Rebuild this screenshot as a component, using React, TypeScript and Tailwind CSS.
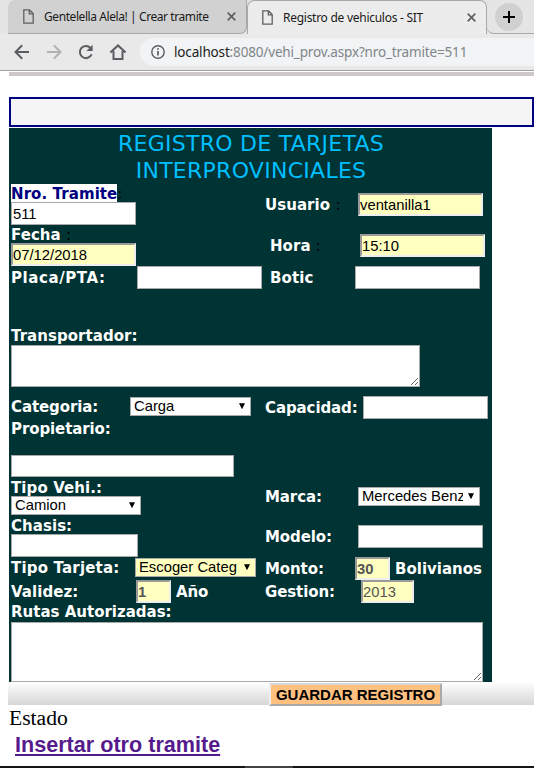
import type { ReactNode } from 'react';

const base = 'block shrink-0 text-[14.8px] text-black outline-none ';
const plain = base + 'h-[23px] border border-[#a9a9a9] bg-white px-px font-["Liberation_Sans",Arial,sans-serif] ';
const inset =
  base +
  'h-[23px] border-2 border-t-[#9a9a9a] border-l-[#9a9a9a] border-r-[#eeeeee] border-b-[#eeeeee] bg-[#ffffc0] font-["Liberation_Sans",Arial,sans-serif] ';

function Label({ children, className = '' }: { children: ReactNode; className?: string }) {
  return (
    <span
      className={
        'block shrink-0 whitespace-pre font-["DejaVu_Sans",Verdana,sans-serif] text-[15px] font-bold leading-[18px] tracking-[-0.1px] text-white ' +
        className
      }
    >
      {children}
    </span>
  );
}

function Colon() {
  return <span className="font-normal text-black">:</span>;
}

function Select({ value, className }: { value: string; className: string }) {
  return (
    <div
      className={
        'flex h-[19px] shrink-0 items-center border border-[#a9a9a9] pl-[3px] pr-[5px] font-["Liberation_Sans",Arial,sans-serif] text-[14.8px] leading-[17px] text-black ' +
        className
      }
    >
      <span className="flex-1 overflow-hidden whitespace-nowrap">{value}</span>
      <svg width="6" height="7" viewBox="0 0 6 7" className="ml-[5px] shrink-0">
        <path d="M0 0.3h6L3 6.3z" fill="#000" />
      </svg>
    </div>
  );
}

function PageIcon() {
  return (
    <svg width="11" height="15" viewBox="0 0 11 15" fill="none" stroke="#5f6062" strokeWidth="1.3" className="shrink-0">
      <path d="M0.8 0.8h5.7l3.7 3.8v9.5H0.8zM6.3 0.8v4h3.9" />
    </svg>
  );
}

function CloseIcon() {
  return (
    <svg width="9" height="9" viewBox="0 0 9 9" stroke="#5f6062" strokeWidth="1.7" className="shrink-0">
      <path d="M0.7 0.7l7.6 7.6M8.3 0.7L0.7 8.3" />
    </svg>
  );
}

function Browser() {
  return (
    <header className='h-[76px] font-["Noto_Sans",sans-serif]'>
      <div className="flex h-[34px] bg-[#e5e5e5] pl-2">
        <div className="flex h-[34px] w-[239px] items-center rounded-tl-[7px] rounded-br-[7px] border-b border-r border-[#a8a8a8] bg-[#d1d1d1] pl-[15px] pr-[10px]">
          <PageIcon />
          <span className="ml-[10px] flex-1 whitespace-nowrap text-[12px] tracking-[-0.42px] text-[#1a1a1a]">Gentelella Alela! | Crear tramite</span>
          <CloseIcon />
        </div>
        <div className="flex h-[34px] w-[240px] items-center rounded-t-[7px] border-x border-t border-[#a8a8a8] bg-[#ececec] pl-[14px] pr-[10px]">
          <PageIcon />
          <span className="ml-[10px] flex-1 whitespace-nowrap text-[12px] tracking-[-0.27px] text-[#1a1a1a]">Registro de vehiculos - SIT</span>
          <CloseIcon />
        </div>
        <div className="flex h-[34px] flex-1 rounded-bl-[7px] border-b border-[#a8a8a8] pl-[8px] pt-[3px]">
          <div className="flex h-7 w-7 items-center justify-center rounded-full bg-[#d0d0d0]">
            <svg width="12" height="12" viewBox="0 0 12 12" stroke="#000" strokeWidth="2">
              <path d="M6 0v12M0 6h12" />
            </svg>
          </div>
        </div>
      </div>
      <div className="flex h-[37px] items-center border-b border-[#a0a0a0] bg-[#e9e9e9] pl-[14px]">
        <svg width="16" height="16" viewBox="0 0 16 16" fill="none" stroke="#5a5d61" strokeWidth="2" className="shrink-0">
          <path d="M15 8H2M8.2 1.3L1.5 8l6.7 6.7" />
        </svg>
        <svg width="16" height="16" viewBox="0 0 16 16" fill="none" stroke="#b2b2b2" strokeWidth="2" className="ml-4 shrink-0">
          <path d="M1 8h13M7.8 1.3L14.5 8l-6.7 6.7" />
        </svg>
        <svg width="16" height="16" viewBox="0 0 16 16" fill="none" stroke="#5a5d61" strokeWidth="2" className="ml-4 shrink-0">
          <path d="M13.6 10.4A6.1 6.1 0 1 1 12.4 3.8" />
          <path d="M14.6 0.8v6.2H8.4z" fill="#5a5d61" stroke="none" />
        </svg>
        <svg width="18" height="18" viewBox="0 0 18 18" fill="none" stroke="#5a5d61" strokeWidth="2" className="ml-[15px] shrink-0">
          <path d="M1.4 9.6L9 2.4l7.6 7.2M4.5 8V16h9V8" />
        </svg>
        <div className="ml-[13px] flex h-7 flex-1 items-center rounded-l-full bg-[#f1f3f4] pl-[11px]">
          <svg width="14" height="14" viewBox="0 0 14 14" fill="none" stroke="#5a5d61" strokeWidth="1.4" className="shrink-0">
            <circle cx="7" cy="7" r="6.2" />
            <path d="M7 3.2v1.6M7 6v4.6" strokeWidth="1.7" />
          </svg>
          <span className="ml-[9px] whitespace-nowrap text-[13.5px] tracking-[-0.16px] text-[#80868b]">
            <span className="text-[#222]">localhost</span>:8080/vehi_prov.aspx?nro_tramite=511
          </span>
        </div>
      </div>
      <div className="ml-[9px] mt-px h-[4px] bg-[#cbc8c7]" />
    </header>
  );
}

export default function App() {
  return (
    <div className="h-[768px] w-[534px] overflow-hidden bg-white">
      <Browser />
      <div className="ml-[9px] mt-[21px] h-[30px] border-2 border-[#000080] bg-[#f5f5f5]" />
      <main className="ml-[9px] mt-px h-[554px] w-[483px] bg-[#003333] pl-[2px]">
        <h1 className='h-[55px] whitespace-nowrap pr-px pt-[2px] text-center font-["DejaVu_Sans",Verdana,sans-serif] text-[22px] leading-[27px] tracking-[0.27px] text-[#00bfff]'>
          REGISTRO DE TARJETAS
          <br />
          INTERPROVINCIALES
        </h1>
        <div className="flex h-[83px]">
          <div className="w-[254px] pt-px">
            <Label className="!h-[18px] !leading-[20px] !tracking-[0.08px]">
              <span className="inline-block h-[18px] bg-white text-[#000080]">Nro. Tramite</span>
              <Colon />
            </Label>
            <input className={plain + 'w-[125px]'} defaultValue="511" />
            <Label className="!h-[18px] !leading-[20px] !tracking-[0.05px]">
              Fecha <Colon />
            </Label>
            <input className={inset + 'w-[125px]'} defaultValue="07/12/2018" />
          </div>
          <div className="pt-[10px]">
            <div className="flex items-center">
              <Label className="w-[93px] !tracking-[0.05px]">
                Usuario <Colon />
              </Label>
              <input className={inset + 'w-[125px]'} defaultValue="ventanilla1" />
            </div>
            <div className="mt-[18px] flex items-center pl-[5px]">
              <Label className="w-[90px] !tracking-[0.05px]">
                Hora <Colon />
              </Label>
              <input className={inset + 'w-[125px]'} defaultValue="15:10" />
            </div>
          </div>
        </div>
        <div className="flex h-[23px] items-center">
          <Label className="w-[126px] !tracking-[0.58px]">Placa/PTA:</Label>
          <input className={plain + 'w-[125px]'} />
          <Label className="ml-[8px] w-[85px] !tracking-[0.1px]">Botic</Label>
          <input className={plain + 'w-[125px]'} />
        </div>
        <Label className="mt-[38px] !tracking-[0.05px]">Transportador:</Label>
        <textarea className="block h-[42px] w-[409px] border border-[#a9a9a9] bg-white outline-none" />
        <div className="mt-[9px] flex h-[23px]">
          <Label className="w-[119px] pt-[2px]">Categoria:</Label>
          <Select value="Carga" className="mt-px w-[121px] bg-white" />
          <Label className="ml-[14px] w-[98px] pt-[3px]">Capacidad:</Label>
          <input className={plain + 'w-[125px]'} />
        </div>
        <Label className="mt-px">Propietario:</Label>
        <input className="mt-[17px] block h-[22px] w-[223px] border border-[#a9a9a9] bg-white outline-none" />
        <div className="mt-[2px] flex h-[78px]">
          <div className="w-[254px]">
            <Label className="h-[17px] !tracking-[0.1px]">Tipo Vehi.:</Label>
            <Select value="Camion" className="w-[130px] bg-white" />
            <Label className="mt-[1px] !h-[18px] !leading-[20px] !tracking-[0.05px]">Chasis:</Label>
            <input className={plain + 'w-[127px]'} />
          </div>
          <div className="pt-[8px]">
            <div className="flex items-center">
              <Label className="w-[93px]">Marca:</Label>
              <Select value="Mercedes Benz" className="w-[122px] bg-white" />
            </div>
            <div className="mt-[19px] flex items-center">
              <Label className="w-[93px]">Modelo:</Label>
              <input className={plain + 'w-[125px]'} />
            </div>
          </div>
        </div>
        <div className="flex h-[23px]">
          <Label className="w-[124px] pt-[2px] !tracking-[0.18px]">Tipo Tarjeta:</Label>
          <Select value="Escoger Categ" className="mt-px w-[121px] bg-[#ffffc0]" />
          <Label className="ml-[9px] w-[90px] pt-[3px]">Monto:</Label>
          <input className={inset + 'w-[35px] font-bold !text-[#555]'} defaultValue="30" />
          <Label className="ml-[5px] pt-[3px] !tracking-[0px]">Bolivianos</Label>
        </div>
        <div className="flex h-[23px] items-center">
          <Label className="w-[125px] !tracking-[0.05px]">Validez:</Label>
          <input className={inset + 'w-[35px] font-bold !text-[#555]'} defaultValue="1" />
          <Label className="ml-[5px] w-[89px]">Año</Label>
          <Label className="w-[96px]">Gestion:</Label>
          <input className={inset + 'w-[53px] !text-[#555]'} defaultValue="2013" />
        </div>
        <Label className="h-[19px] !tracking-[0px]">Rutas Autorizadas:</Label>
        <textarea className="block h-[60px] w-[472px] border border-[#a9a9a9] bg-white outline-none" />
      </main>
      <div className="ml-[8px] h-[23px] bg-gradient-to-b from-white to-[#d6d6d6] pl-[261px] pt-px">
        <button className='block h-[23px] w-[173px] whitespace-nowrap border-2 border-t-[#d8d8d8] border-l-[#eeeeee] border-r-[#a9a9a9] border-b-[#a9a9a9] bg-[#ffc080] font-["Liberation_Sans",Arial,sans-serif] text-[15px] font-bold leading-[19px] text-black'>
          GUARDAR REGISTRO
        </button>
      </div>
      <p className='ml-[9px] h-[26px] font-["Liberation_Serif","Times_New_Roman",serif] text-[21.6px] leading-[26px] text-black'>Estado</p>
      <p className='h-[35px] pl-[15px] font-["Liberation_Sans",Arial,sans-serif] text-[21.6px] font-bold leading-[27px] text-[#551a8b]'>
        <a className="underline decoration-2 underline-offset-2">Insertar otro tramite</a>
      </p>
      <div className="flex h-[2px] bg-[#151515] pl-[245px]">
        <div className="w-[48px] bg-[#444]" />
      </div>
    </div>
  );
}
